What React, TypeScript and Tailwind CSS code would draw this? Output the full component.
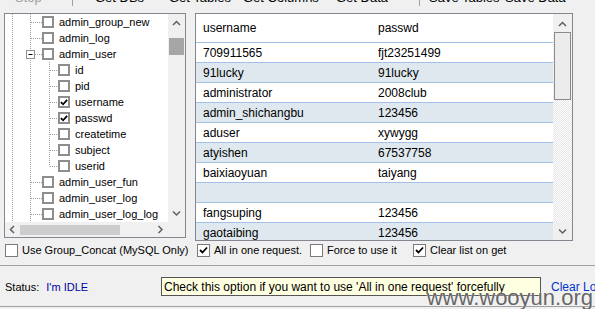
import React from "react";

type Node = { label: string; level: 1 | 2; checked?: boolean; open?: boolean; last?: boolean };

const tree: Node[] = [
  { label: "admin_group_new", level: 1 },
  { label: "admin_log", level: 1 },
  { label: "admin_user", level: 1, open: true },
  { label: "id", level: 2 },
  { label: "pid", level: 2 },
  { label: "username", level: 2, checked: true },
  { label: "passwd", level: 2, checked: true },
  { label: "createtime", level: 2 },
  { label: "subject", level: 2 },
  { label: "userid", level: 2, last: true },
  { label: "admin_user_fun", level: 1 },
  { label: "admin_user_log", level: 1 },
  { label: "admin_user_log_log", level: 1 },
];

const rows: [string, string][] = [
  ["709911565", "fjt23251499"],
  ["91lucky", "91lucky"],
  ["administrator", "2008club"],
  ["admin_shichangbu", "123456"],
  ["aduser", "xywygg"],
  ["atyishen", "67537758"],
  ["baixiaoyuan", "taiyang"],
  ["", ""],
  ["fangsuping", "123456"],
  ["gaotaibing", "123456"],
];

const dots = { stroke: "#a0a0a0", strokeWidth: 1, strokeDasharray: "1 1" };

function Check({ size = "tree" }: { size?: "tree" | "flat" }) {
  return (
    <svg width="9" height="9" viewBox="0 0 9 9" className="block">
      <path d="M1 4 L3.5 6.5 L8 1.5" fill="none" stroke="#000" strokeWidth={size === "tree" ? 2 : 1.8} />
    </svg>
  );
}

function TreeBox({ checked }: { checked?: boolean }) {
  return (
    <div className="flex h-[12px] w-[12px] shrink-0 items-center justify-center border-2 border-[#8e8e8e] bg-white">
      {checked && <Check />}
    </div>
  );
}

function FlatBox({ checked }: { checked?: boolean }) {
  return (
    <div className="flex h-[13px] w-[13px] shrink-0 items-center justify-center border border-[#7a7a7a] bg-white">
      {checked && <Check size="flat" />}
    </div>
  );
}

function Guides({ node }: { node: Node }) {
  if (node.level === 1) {
    return (
      <svg width="37" height="16" className="shrink-0">
        <line x1="7.5" y1="0" x2="7.5" y2="16" {...dots} />
        <line x1="25.5" y1="0" x2="25.5" y2="16" {...dots} />
        {node.open ? (
          <>
            <line x1="30" y1="8.5" x2="37" y2="8.5" {...dots} />
            <rect x="21.5" y="4.5" width="8" height="8" fill="#fff" stroke="#919191" />
            <line x1="23.5" y1="8.5" x2="27.5" y2="8.5" stroke="#000" />
          </>
        ) : (
          <line x1="26" y1="8.5" x2="37" y2="8.5" {...dots} />
        )}
      </svg>
    );
  }
  return (
    <svg width="53" height="16" className="shrink-0">
      <line x1="7.5" y1="0" x2="7.5" y2="16" {...dots} />
      <line x1="25.5" y1="0" x2="25.5" y2="16" {...dots} />
      <line x1="44.5" y1="0" x2="44.5" y2={node.last ? 8.5 : 16} {...dots} />
      <line x1="45" y1="8.5" x2="53" y2="8.5" {...dots} />
    </svg>
  );
}

function Arrow({ dir }: { dir: "up" | "down" | "left" | "right" }) {
  const d = {
    up: "M1 5 L4.5 1.5 L8 5",
    down: "M1 1.5 L4.5 5 L8 1.5",
    left: "M5 1 L1.5 4.5 L5 8",
    right: "M1.5 1 L5 4.5 L1.5 8",
  }[dir];
  const horiz = dir === "left" || dir === "right";
  return (
    <svg width={horiz ? 7 : 9} height={horiz ? 9 : 7} className="block">
      <path d={d} fill="none" stroke="#606060" strokeWidth="1.5" />
    </svg>
  );
}

function Tree() {
  return (
    <div className="flex h-[225px] w-[182px] flex-col border border-[#828790] bg-white">
      <div className="flex h-[208px]">
        <div className="w-[163px] overflow-hidden text-[11px] leading-[16px] text-black">
          {tree.map((n) => (
            <div key={n.label} className="flex h-[16px] items-center whitespace-nowrap">
              <Guides node={n} />
              <TreeBox checked={n.checked} />
              <span className="ml-[5px]">{n.label}</span>
            </div>
          ))}
        </div>
        <div className="flex w-[17px] flex-col items-center bg-[#f0f0f0]">
          <div className="flex h-[17px] items-center justify-center pt-[2px]">
            <Arrow dir="up" />
          </div>
          <div className="mt-[7px] h-[17px] w-[15px] bg-[#a6a6a6]" />
          <div className="flex-1" />
          <div className="flex h-[17px] items-center justify-center">
            <Arrow dir="down" />
          </div>
        </div>
      </div>
      <div className="flex flex-1">
        <div className="flex w-[163px] items-center bg-[#f0f0f0]">
          <div className="flex w-[15px] justify-center">
            <Arrow dir="left" />
          </div>
          <div className="h-[10px] w-[100px] bg-[#cdcdcd]" />
          <div className="flex-1" />
          <div className="flex w-[15px] justify-center">
            <Arrow dir="right" />
          </div>
        </div>
        <div className="w-[17px] bg-[#f0f0f0]" />
      </div>
    </div>
  );
}

function Grid() {
  return (
    <div className="flex h-[228px] w-[378px] border border-[#828790] bg-white">
      <div className="w-[357px] overflow-hidden text-[12px] text-black">
        <div className="flex h-[29px] items-center border-b border-[#a3c1e6]">
          <div className="w-[175px] pl-[7px]">username</div>
          <div className="pl-[7px]">passwd</div>
        </div>
        {rows.map(([u, p], i) => (
          <div
            key={i}
            className={`flex h-[20px] items-center border-b border-[#a3c1e6] ${i % 2 === 1 ? "bg-[#dee8ee]" : "bg-white"}`}
          >
            <div className="w-[175px] pl-[7px]">{u}</div>
            <div className="pl-[7px]">{p}</div>
          </div>
        ))}
      </div>
      <div className="flex w-[19px] flex-col items-center bg-[repeating-conic-gradient(#ffffff_0_25%,#e6e6e6_0_50%)] bg-[length:2px_2px]">
        <div className="flex h-[18px] w-full items-center justify-center bg-[#f0f0f0] pt-[2px]">
          <Arrow dir="up" />
        </div>
        <div className="h-[68px] w-[17px] border border-[#8a8a8a] bg-[#ececec]" />
        <div className="flex-1" />
        <div className="flex h-[18px] w-full items-center justify-center bg-[#f0f0f0]">
          <Arrow dir="down" />
        </div>
      </div>
    </div>
  );
}

function Opt({ label, checked, className }: { label: string; checked?: boolean; className: string }) {
  return (
    <div className={`flex items-center gap-[4px] ${className}`}>
      <FlatBox checked={checked} />
      <span>{label}</span>
    </div>
  );
}

export default function App() {
  return (
    <div
      className="relative h-[309px] w-[595px] overflow-hidden bg-[#f0f0f0] text-black"
      style={{ fontFamily: '"Liberation Sans", Arial, sans-serif' }}
    >
      {/* toolbar, only the bottom edge of it is in view */}
      <div className="h-[13px] overflow-hidden">
        <div className="-mt-[10px] flex h-[16px] items-center whitespace-nowrap text-[13px] leading-[16px]">
          <div className="w-[57px] pl-[15px] text-[#a0a0a0]">Stop</div>
          <div className="w-[38px] pl-[15px]">
            <div className="h-[16px] w-px bg-[#a0a0a0]" />
          </div>
          <div className="w-[74px]">Get DBs</div>
          <div className="w-[74px]">Get Tables</div>
          <div className="w-[93px]">Get Columns</div>
          <div className="w-[83px]">Get Data</div>
          <div className="w-[10px]">
            <div className="h-[16px] w-px bg-[#a0a0a0]" />
          </div>
          <div className="w-[76px]">Save Tables</div>
          <div>Save Data</div>
        </div>
      </div>

      <div className="flex items-start pl-[4px]">
        <Tree />
        <div className="ml-[9px]">
          <Grid />
        </div>
      </div>

      <div className="mt-[2px] flex h-[15px] items-center text-[11px]">
        <Opt className="ml-[5px] w-[192px]" label="Use Group_Concat (MySQL Only)" />
        <Opt className="w-[113px]" label="All in one request." checked />
        <Opt className="w-[103px]" label="Force to use it" />
        <Opt label="Clear list on get" checked />
      </div>

      <div className="mt-[7px] border-t border-[#a0a0a0]" />

      <div className="flex h-[40px] items-center pt-[2px] text-[11px]">
        <span className="ml-[5px]">Status:</span>
        <span className="ml-[7px] text-[#0000a0]">I'm IDLE</span>
        <span className="ml-auto mr-[-8px] text-[12px] text-[#0033cc]">Clear Log</span>
      </div>
      <div className="border-t border-[#a0a0a0]" />

      {/* tooltip */}
      <div className="absolute left-[161px] top-[277px] flex h-[19px] w-[380px] items-center whitespace-nowrap border border-[#555] bg-[#ffffe1] pl-[2px] text-[12px] text-black">
        Check this option if you want to use 'All in one request' forcefully
      </div>

      {/* watermark */}
      <div
        className="absolute right-[2px] top-[287px] text-[22px] leading-[22px] text-[#666]"
        style={{ fontFamily: '"Liberation Sans Narrow", "Liberation Sans", sans-serif', textShadow: "0 0 2px #fff" }}
      >
        www.wooyun.org
      </div>
    </div>
  );
}
